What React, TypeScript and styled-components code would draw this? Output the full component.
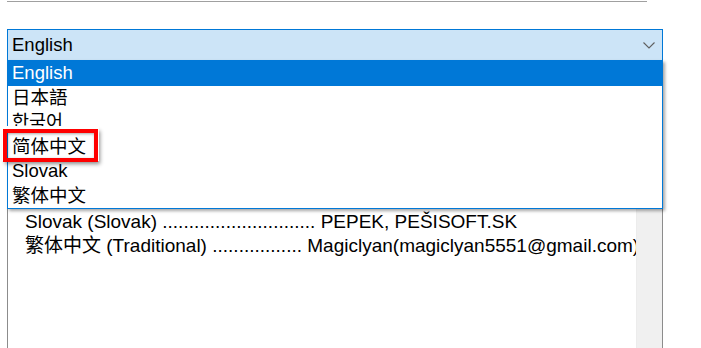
import styled, { createGlobalStyle } from "styled-components"

const GlobalStyle = createGlobalStyle`
  html, body {
    margin: 0;
    padding: 0;
    background: #ffffff;
    overflow: hidden;
  }
  body {
    font-family: "Liberation Sans", "Noto Sans CJK SC", sans-serif;
    color: #000000;
  }
`

type Language = {
  name: string
  credit: string
  leader: string
  author: string
}

const languages: Language[] = [
  { name: "English", credit: "English (Original)", leader: "......................", author: "Original author" },
  { name: "日本語", credit: "日本語 (Japanese)", leader: "......................", author: "Japanese translator" },
  { name: "한국어", credit: "한국어 (Korean)", leader: "..........................", author: "Korean translator" },
  { name: "简体中文", credit: "简体中文 (Simplified)", leader: "................", author: "Simplified translator" },
  { name: "Slovak", credit: "Slovak (Slovak)", leader: ".............................", author: "PEPEK, PEŠISOFT.SK" },
  { name: "繁体中文", credit: "繁体中文 (Traditional)", leader: ".................", author: "Magiclyan(magiclyan5551@gmail.com)" },
]

export default function App() {
  const selected = "English"
  return (
    <Page>
      <GlobalStyle />
      <Rule />
      <Field>
        <Combo>
          <ComboText>{selected}</ComboText>
          <Chevron width="12" height="7" viewBox="0 0 12 7">
            <path d="M0.5 0.5 L6 6 L11.5 0.5" fill="none" stroke="#5f5f5f" strokeWidth="1.1" />
          </Chevron>
        </Combo>

        <Credits>
          <CreditList>
            {languages.map((l) => (
              <CreditRow key={l.name}>
                {l.credit} {l.leader} {l.author}
              </CreditRow>
            ))}
          </CreditList>
          <Track />
        </Credits>

        <Dropdown>
          {languages.map((l) => (
            <Option key={l.name} $active={l.name === selected}>
              {l.name}
            </Option>
          ))}
        </Dropdown>

        <Highlight />
      </Field>
    </Page>
  )
}

const Page = styled.div`
  width: 701px;
  height: 348px;
  padding-left: 7px;
  box-sizing: border-box;
  overflow: hidden;
`

const Rule = styled.div`
  width: 640px;
  height: 1px;
  margin-top: 1px;
  background: #a0a0a0;
`

const Field = styled.div`
  position: relative;
  width: 656px;
  margin-top: 27px;
`

const Combo = styled.div`
  display: flex;
  align-items: center;
  justify-content: space-between;
  height: 32px;
  box-sizing: border-box;
  padding: 0 7px 0 4px;
  border: 1px solid #0078d7;
  background: #cce4f7;
`

const ComboText = styled.span`
  font-size: 18.5px;
  line-height: 1;
`

const Chevron = styled.svg`
  display: block;
`

const Credits = styled.div`
  display: flex;
  height: 280px;
  margin-top: 12px;
  border-left: 1px solid #8c8c8c;
  border-right: 1px solid #8c8c8c;
  background: #ffffff;
`

const CreditList = styled.div`
  flex: 1;
  min-width: 0;
  overflow: hidden;
  padding: 41px 0 0 17px;
`

const CreditRow = styled.div`
  height: 24px;
  line-height: 24px;
  font-size: 19px;
  white-space: nowrap;
  color: #000000;
`

const Track = styled.div`
  width: 25px;
  background: #f0f0f0;
  border-left: 1px solid #ececec;
`

const Dropdown = styled.div`
  position: absolute;
  top: 31px;
  left: 0;
  right: 0;
  border: 1px solid #0078d7;
  background: #ffffff;
  box-shadow: 2px 2px 3px rgba(0, 0, 0, 0.35);
`

const Option = styled.div<{ $active: boolean }>`
  height: 24.5px;
  line-height: 24.5px;
  padding-left: 4px;
  font-size: 18.5px;
  white-space: nowrap;
  overflow: hidden;
  background: ${({ $active }) => ($active ? "#0078d7" : "#ffffff")};
  color: ${({ $active }) => ($active ? "#ffffff" : "#000000")};
`

const Highlight = styled.div`
  position: absolute;
  left: -4px;
  top: 100px;
  width: 95px;
  height: 33px;
  box-sizing: border-box;
  border: 4px solid #ff0000;
  box-shadow: 0 -2px 0 1px #ffffff, 2px 2px 4px rgba(0, 0, 0, 0.45),
    inset 1px 1px 3px rgba(0, 0, 0, 0.35);
  pointer-events: none;
`
